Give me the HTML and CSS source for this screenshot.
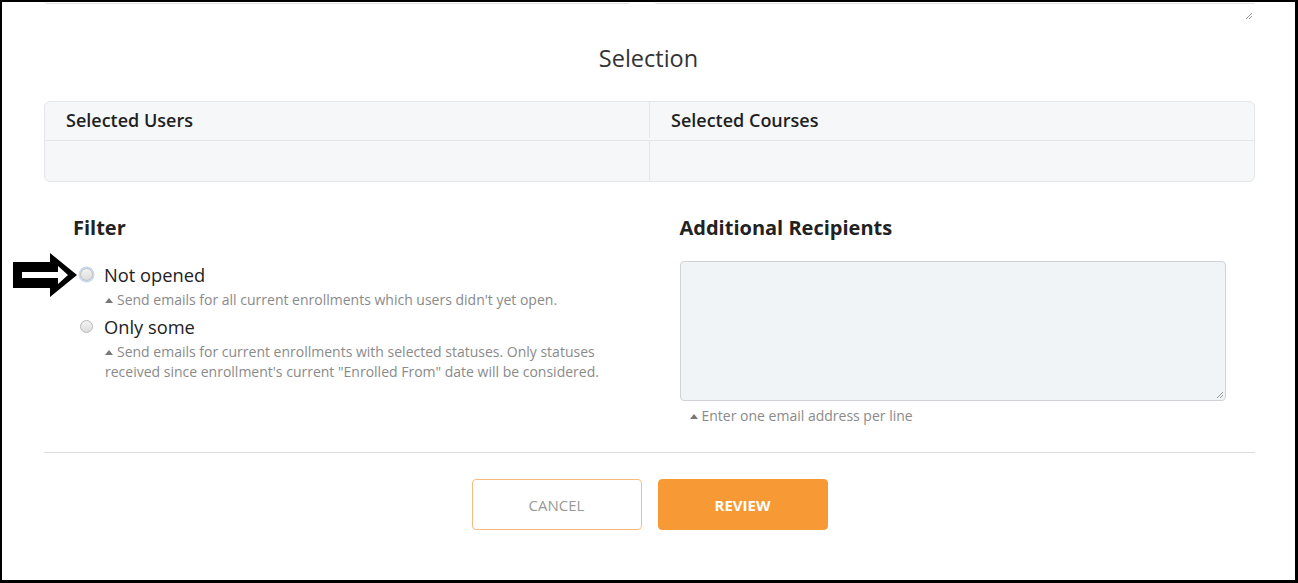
FILE: index.html
```html
<!DOCTYPE html>
<html>
<head>
<meta charset="utf-8">
<link rel="stylesheet" href="styles.css">
</head>
<body>
<div class="frame">
  <div class="remnants">
    <div class="remnant remnant-left"></div>
    <div class="remnant remnant-right"></div>
  </div>
  <div class="handle-row">
    <svg class="handle" width="8" height="8" viewBox="0 0 8 8"><path d="M7 1 L1 7 M7 4 L4 7" stroke="#999" stroke-width="1" fill="none"/></svg>
  </div>
  <h2 class="title">Selection</h2>
  <div class="sel-table">
    <div class="sel-row sel-head">
      <div class="sel-cell">Selected Users</div>
      <div class="sel-cell">Selected Courses</div>
    </div>
    <div class="sel-row sel-body">
      <div class="sel-cell"></div>
      <div class="sel-cell"></div>
    </div>
  </div>
  <div class="cols">
    <div class="col col-left">
      <h3 class="heading">Filter</h3>
      <div class="option">
        <span class="radio radio-focus"></span>
        <span class="opt-label">Not opened</span>
      </div>
      <p class="hint hint-opt"><span class="tri"></span>Send emails for all current enrollments which users didn't yet open.</p>
      <div class="option">
        <span class="radio"></span>
        <span class="opt-label">Only some</span>
      </div>
      <p class="hint hint-opt"><span class="tri"></span>Send emails for current enrollments with selected statuses. Only statuses received since enrollment's current "Enrolled From" date will be considered.</p>
      <svg class="arrow" width="66" height="45" viewBox="0 0 66 45">
        <polygon points="0,9 37,9 37,0 64,22 37,44 37,35 0,35" fill="#000"/>
        <polygon points="9,19 45,19 45,13 55,22 45,31 45,25 9,25" fill="#fff"/>
      </svg>
    </div>
    <div class="col col-right">
      <h3 class="heading">Additional Recipients</h3>
      <div class="textarea">
        <svg class="handle handle-ta" width="8" height="8" viewBox="0 0 8 8"><path d="M7 1 L1 7 M7 4 L4 7" stroke="#999" stroke-width="1" fill="none"/></svg>
      </div>
      <p class="hint hint-ta"><span class="tri"></span>Enter one email address per line</p>
    </div>
  </div>
  <div class="rule"></div>
  <div class="actions">
    <button class="btn btn-cancel">CANCEL</button>
    <button class="btn btn-review">REVIEW</button>
  </div>
</div>
</body>
</html>
```
FILE: styles.css
```css
* { box-sizing: border-box; }
html, body { margin: 0; padding: 0; background: #fff; }
body { font-family: "Open Sans", "Lato", sans-serif; color: #222; }

.frame {
  width: 1298px;
  height: 583px;
  border-style: solid;
  border-color: #000;
  border-width: 2px 3px 3px 2px;
  position: relative;
  overflow: hidden;
}

.remnants {
  display: flex;
  padding: 0 40px 0 43px;
  gap: 25px;
}
.remnant {
  height: 2px;
  border-bottom: 1px solid #e2e2e2;
  border-radius: 0 0 4px 4px;
}
.remnant-left { width: 585px; }
.remnant-right { flex: 1; }

.handle-row {
  display: flex;
  justify-content: flex-end;
  padding: 8px 42px 0 0;
  height: 20px;
}

.title {
  margin: 18px 0 0;
  text-align: center;
  font-weight: 400;
  font-size: 23.5px;
  line-height: 32px;
  color: #333;
}

.sel-table {
  margin: 27px 40px 0 42px;
  border: 1px solid #e4e6e9;
  border-radius: 6px;
  background: #f6f7f9;
  overflow: hidden;
}
.sel-row { display: flex; }
.sel-head { border-bottom: 1px solid #e4e6e9; height: 39px; padding-bottom: 2px; }
.sel-body { height: 40px; }
.sel-cell {
  flex: 1 1 0;
  padding: 0 21px;
  display: flex;
  align-items: center;
  font-size: 18px;
  font-weight: 600;
  color: #1f1f1f;
}
.sel-cell + .sel-cell { border-left: 1px solid #e4e6e9; }

.cols {
  display: flex;
  margin: 0 40px 0 42px;
  height: 270px;
}
.col { width: 50%; flex: none; position: relative; }
.col-left { padding-left: 29px; }
.col-right { padding-left: 30px; padding-right: 29px; }

.heading {
  margin: 32px 0 0;
  font-size: 20px;
  line-height: 28px;
  font-weight: 700;
  color: #222;
}

.option {
  display: flex;
  align-items: center;
  height: 26px;
  margin-top: 19px;
}
.hint-opt + .option { margin-top: 3px; }
.radio {
  width: 13px;
  height: 13px;
  margin-left: 7px;
  border-radius: 50%;
  border: 1px solid #b9b9b9;
  background: linear-gradient(#f3f3f3, #dcdcdc);
}
.radio-focus { box-shadow: 0 0 0 1.5px #c5dbf4; }
.opt-label {
  margin-left: 11px;
  font-size: 18.3px;
  color: #222;
}

.hint {
  margin: 3px 0 0;
  font-size: 14px;
  line-height: 20px;
  color: #8a8a8a;
}
.hint-opt { padding-left: 32px; max-width: 530px; }
.tri {
  display: inline-block;
  width: 0; height: 0;
  border-left: 4px solid transparent;
  border-right: 4px solid transparent;
  border-bottom: 5px solid #777;
  margin-right: 4px;
  vertical-align: 2px;
}

.arrow {
  position: absolute;
  left: -31px;
  top: 71px;
}

.textarea {
  margin-top: 19px;
  height: 140px;
  border: 1px solid #cfd3d7;
  border-radius: 4px;
  background: #f1f4f7;
  position: relative;
}
.handle-ta { position: absolute; right: 1px; bottom: 1px; }
.hint-ta { margin-top: 5px; padding-left: 10px; }

.rule {
  margin: 0 40px 0 42px;
  height: 1px;
  background: #dcdcdc;
}

.actions {
  display: flex;
  justify-content: center;
  gap: 16px;
  margin-top: 26px;
  padding-left: 2px;
}
.btn {
  width: 170px;
  height: 51px;
  border-radius: 4px;
  font-family: "Open Sans", sans-serif;
  font-size: 15px;
  cursor: pointer;
}
.btn-cancel {
  background: #fff;
  border: 1px solid #f9bb7c;
  color: #999;
}
.btn-review {
  background: #f79a36;
  border: 1px solid #f79a36;
  color: #fff;
  font-weight: 700;
}
```
